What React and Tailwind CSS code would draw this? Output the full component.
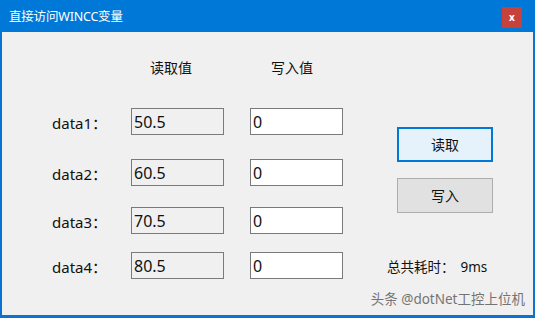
import React from 'react';

const rows = [
  { name: 'data1', read: '50.5', write: '0', mt: 'mt-[33px]' },
  { name: 'data2', read: '60.5', write: '0', mt: 'mt-[24px]' },
  { name: 'data3', read: '70.5', write: '0', mt: 'mt-[21px]' },
  { name: 'data4', read: '80.5', write: '0', mt: 'mt-[18px]' },
];

const App = () => {
  return (
    <div
      className="w-[535px] h-[318px] bg-[#0b72d4] flex flex-col overflow-hidden"
      style={{ fontFamily: '"Noto Sans", "Noto Sans CJK SC", sans-serif' }}
    >
      {/* title bar */}
      <div className="h-[32px] flex items-center justify-between pl-[9px] pr-[13px] pt-[2px] bg-[#0078d7]">
        <span className="text-white text-[12.5px] tracking-[-0.2px]">直接访问WINCC变量</span>
        <div className="w-[20px] h-[21px] bg-[#c8423c] flex items-center justify-center text-white text-[10px] font-bold leading-none">
          x
        </div>
      </div>

      {/* body */}
      <div className="flex-1 mx-[2px] mb-[3px] bg-[#f0f0f0] flex text-[15px] text-[#111]">
        <div className="w-[345px] pt-[29px]">
          <div className="flex text-[14px] leading-none">
            <span className="ml-[148px]">读取值</span>
            <span className="ml-[79px]">写入值</span>
          </div>
          {rows.map((r) => (
            <div key={r.name} className={`flex items-center ${r.mt}`}>
              <span className="w-[129px] pl-[50px] pt-[3px] leading-none">{r.name}：</span>
              <div className="w-[93px] h-[27px] border border-[#7a7a7a] bg-[#f0f0f0] flex items-center pl-[2px] text-[16px]">
                {r.read}
              </div>
              <div className="w-[93px] h-[27px] ml-[26px] border border-[#7a7a7a] bg-white flex items-center pl-[2px] text-[16px]">
                {r.write}
              </div>
            </div>
          ))}
        </div>

        <div className="flex-1 flex flex-col relative">
          <div className="ml-[50px] mt-[95px] w-[96px] h-[35px] border-2 border-[#0078d7] bg-[#e5f1fb] flex items-center justify-center text-[14px]">
            读取
          </div>
          <div className="ml-[50px] mt-[16px] w-[96px] h-[35px] border border-[#adadad] bg-[#e1e1e1] flex items-center justify-center text-[14px]">
            写入
          </div>
          <div className="ml-[40px] mt-[44px] text-[13.5px] flex">
            <span>总共耗时：</span>
            <span className="ml-[6px]">9ms</span>
          </div>
          <div className="absolute right-[8px] bottom-[6px] text-[13.5px] text-[#555] opacity-80">
            头条 @dotNet工控上位机
          </div>
        </div>
      </div>
    </div>
  );
};

export default App;
